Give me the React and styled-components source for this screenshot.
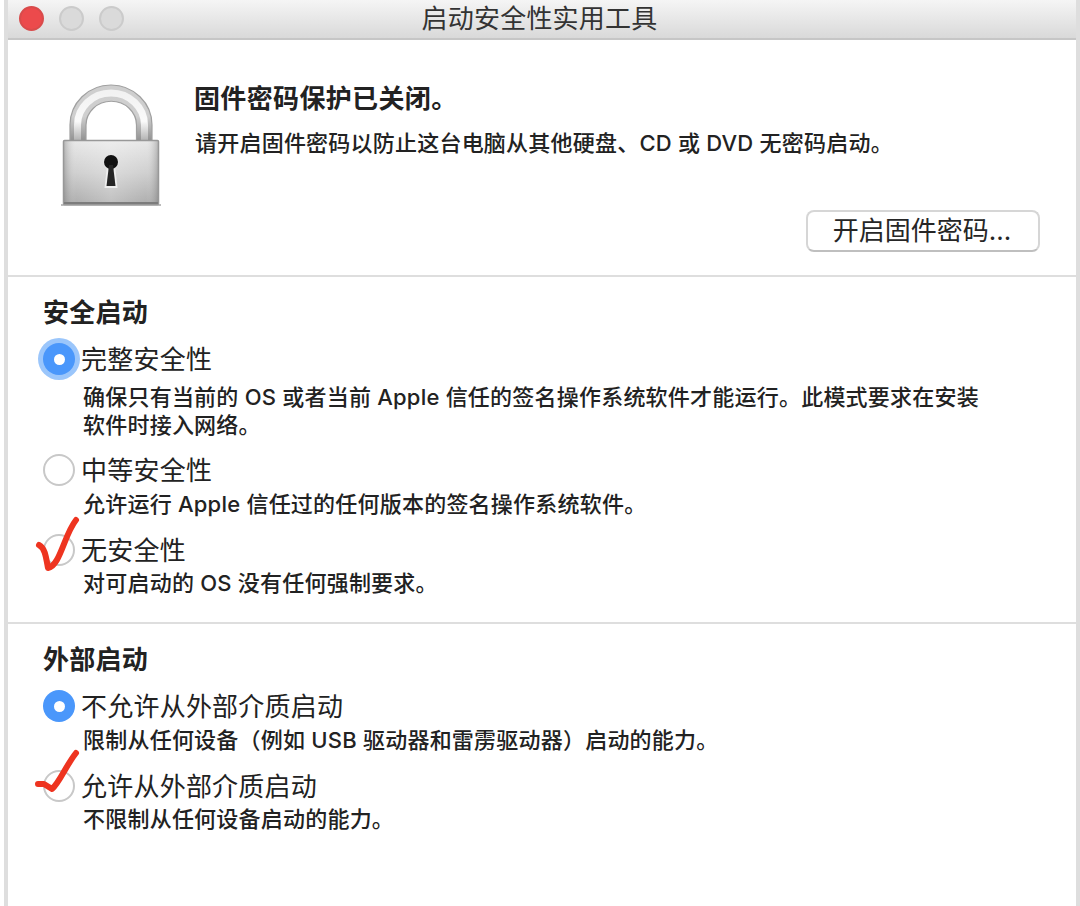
import React, {useState} from 'react'
import styled, {createGlobalStyle} from "styled-components";


const GlobalStyle = createGlobalStyle`
    * {
        box-sizing: border-box;
    }

    body {
        margin: 0;
        background: #fff;
        overflow: hidden;
    }
`

const Window = styled.div`
    display: flex;
    flex-direction: column;
    height: 906px;
    border-left: 4px solid #dedede;
    border-right: 4px solid #dedede;
    margin-left: 4px;
    background: #fff;
    color: #222;
    font-family: Inter, "Noto Sans CJK SC", sans-serif;
    font-size: 22px;
    line-height: 28px;
    letter-spacing: 0.22px;
    white-space: nowrap;
`

const TitleBar = styled.header`
    display: grid;
    grid-template-columns: 1fr auto 1fr;
    align-items: center;
    height: 40px;
    padding: 0 16px 2px 11px;
    background: linear-gradient(#f5f5f5, #d9d9d9);
    border-bottom: 2px solid #c6c6c6;
`

const Lights = styled.div`
    display: flex;
    gap: 15px;
`

const Light = styled.span`
    width: 25px;
    height: 25px;
    border-radius: 50%;
    background: ${props => props.$close ? "#ec4a4c" : "#dadada"};
    border: 2px solid ${props => props.$close ? "#d94b4b" : "#cbcbcb"};
`

const Title = styled.h1`
    margin: 0;
    padding-top: 1px;
    font-size: 26px;
    font-weight: 400;
    line-height: 34px;
    color: #333;
`

const Firmware = styled.section`
    display: flex;
    height: 237px;
    padding: 42px 36px 0 52px;
    border-bottom: 2px solid #dedede;
`

const FirmwareBody = styled.div`
    display: flex;
    flex-direction: column;
    flex: 1;
    padding-left: 32px;
`

const FirmwareTitle = styled.h2`
    margin: 0;
    padding-top: 1px;
    font-size: 26px;
    font-weight: 700;
    line-height: 32px;
    letter-spacing: 0.35px;
`

const FirmwareText = styled.p`
    margin: 14px 0 0 1px;
    font-weight: 500;
`

const Button = styled.button`
    align-self: flex-end;
    width: 234px;
    height: 42px;
    margin-top: 53px;
    padding: 0 2px 1px 0;
    border: 2px solid #d6d6d6;
    border-bottom-color: #bfbfbf;
    border-radius: 8px;
    background: #fff;
    color: #262626;
    font-family: inherit;
    font-size: 26px;
    line-height: 36px;
`

const Section = styled.section`
    height: ${props => props.$height}px;
    padding: 20px 36px 0 35px;
    border-bottom: ${props => props.$last ? "none" : "2px solid #dedede"};
`

const SectionTitle = styled.h2`
    margin: 0 0 14px;
    font-size: 26px;
    font-weight: 700;
    line-height: 32px;
`

const Option = styled.div`
    margin-bottom: ${props => props.$after || 16}px;
`

const OptionLabel = styled.label`
    display: flex;
    align-items: center;
    gap: 6px;
    height: 32px;
    font-size: 26px;
    line-height: 32px;
`

const LabelText = styled.span`
    padding-top: 2px;
`

const Radio = styled.span`
    display: flex;
    align-items: center;
    justify-content: center;
    position: relative;
    width: 32px;
    height: 32px;
    border-radius: 50%;
    background: ${props => props.$checked ? "#4a97fb" : "#fff"};
    border: ${props => props.$checked ? "none" : "2px solid #c8c8c8"};
    box-shadow: ${props => props.$focused ? "0 0 0 5px #9bc6fb" : "none"};
`

const Dot = styled.span`
    width: 11px;
    height: 11px;
    border-radius: 50%;
    background: #fff;
`

const Mark = styled.svg`
    position: absolute;
    left: -14px;
    top: -22px;
    overflow: visible;
`

const Description = styled.p`
    margin: ${props => props.$gap || 4}px 0 0 40px;
    font-weight: 500;
    white-space: pre-line;
`

const Padlock = () => (
    <svg width="102" height="128" viewBox="0 0 102 128">
        <defs>
            <linearGradient id="body" x1="0" y1="0" x2="0" y2="1">
                <stop offset="0" stopColor="#e6e6e6"/>
                <stop offset="0.5" stopColor="#cbcbcb"/>
                <stop offset="1" stopColor="#a4a4a4"/>
            </linearGradient>
            <linearGradient id="shine" x1="0" y1="0" x2="1" y2="0">
                <stop offset="0" stopColor="#777" stopOpacity="0.45"/>
                <stop offset="0.13" stopColor="#fff" stopOpacity="0.1"/>
                <stop offset="0.5" stopColor="#fff" stopOpacity="0.3"/>
                <stop offset="0.87" stopColor="#fff" stopOpacity="0.1"/>
                <stop offset="1" stopColor="#777" stopOpacity="0.45"/>
            </linearGradient>
            <linearGradient id="shackle" x1="0" y1="0" x2="0" y2="1">
                <stop offset="0" stopColor="#cecece"/>
                <stop offset="0.55" stopColor="#cfcfcf"/>
                <stop offset="1" stopColor="#8e8e8e"/>
            </linearGradient>
            <linearGradient id="glint" x1="0" y1="0" x2="0" y2="1">
                <stop offset="0" stopColor="#f2f2f2"/>
                <stop offset="0.6" stopColor="#fafafa"/>
                <stop offset="1" stopColor="#b4b4b4"/>
            </linearGradient>
        </defs>
        <path d="M10 60V43a41 40 0 0 1 82 0v17H76.500V43a25 23.500 0 0 0-50.500 0v17Z" fill="url(#shackle)" stroke="#a0a0a0" strokeWidth="1.2"/>
        <path d="M17.500 58V43a33.500 32 0 0 1 67 0v15" fill="none" stroke="url(#glint)" strokeWidth="7"/>
        <path d="M1 122h100v2H1Z" fill="#777" opacity="0.5"/>
        <rect x="3.5" y="58.5" width="95" height="64" rx="1" fill="url(#body)"/>
        <rect x="3.5" y="58.5" width="95" height="64" rx="1" fill="url(#shine)" stroke="#989898" strokeWidth="1.5"/>
        <path d="M4 121h94" stroke="#7c7c7c" strokeWidth="2"/>
        <path d="M47 84 44.500 106h13L55 84Z" fill="#eee"/>
        <circle cx="51" cy="80" r="8" fill="#e4e4e4"/>
        <circle cx="51" cy="80" r="7" fill="#111"/>
        <path d="M49 83 46.500 104h9L53 83Z" fill="#252525"/>
    </svg>
)

// hand drawn ticks, they lie over the radio circles
const marks = {
    deep: "M8 31C14 34 15 43 17 54C29 52 33 21 45 6",
    flat: "M7 34L13 34L21 39C29 32 34 17 45 3"
}

const security = [
    {
        label: "完整安全性",
        text: "确保只有当前的 OS 或者当前 Apple 信任的签名操作系统软件才能运行。此模式要求在安装\n软件时接入网络。",
        gap: 8,
        after: 15,
        focusable: true
    },
    {label: "中等安全性", text: "允许运行 Apple 信任过的任何版本的签名操作系统软件。"},
    {label: "无安全性", text: "对可启动的 OS 没有任何强制要求。", gap: 3, mark: "deep"}
]

const external = [
    {label: "不允许从外部介质启动", text: "限制从任何设备（例如 USB 驱动器和雷雳驱动器）启动的能力。"},
    {label: "允许从外部介质启动", text: "不限制从任何设备启动的能力。", gap: 3, mark: "flat"}
]

const OptionList = props => {
    const [selected, setSelected] = useState(0)

    return props.options.map((option, index) => {
        const checked = index === selected
        return (
            <Option key={index} $after={option.after}>
                <OptionLabel onClick={() => setSelected(index)}>
                    <Radio $checked={checked} $focused={checked && option.focusable}>
                        {checked && <Dot/>}
                        {option.mark && (
                            <Mark width="60" height="64" viewBox="0 0 60 64">
                                <path d={marks[option.mark]} fill="none" stroke="#ee3420" strokeWidth="6" strokeLinecap="round" strokeLinejoin="round"/>
                            </Mark>
                        )}
                    </Radio>
                    <LabelText>{option.label}</LabelText>
                </OptionLabel>
                <Description $gap={option.gap}>{option.text}</Description>
            </Option>
        )
    })
}

const App = () => {
    return (
        <>
            <GlobalStyle/>
            <Window>
                <TitleBar>
                    <Lights>
                        <Light $close/>
                        <Light/>
                        <Light/>
                    </Lights>
                    <Title>启动安全性实用工具</Title>
                </TitleBar>
                <Firmware>
                    <Padlock/>
                    <FirmwareBody>
                        <FirmwareTitle>固件密码保护已关闭。</FirmwareTitle>
                        <FirmwareText>请开启固件密码以防止这台电脑从其他硬盘、CD 或 DVD 无密码启动。</FirmwareText>
                        <Button>开启固件密码...</Button>
                    </FirmwareBody>
                </Firmware>
                <Section $height={347}>
                    <SectionTitle>安全启动</SectionTitle>
                    <OptionList options={security}/>
                </Section>
                <Section $height={282} $last>
                    <SectionTitle>外部启动</SectionTitle>
                    <OptionList options={external}/>
                </Section>
            </Window>
        </>
    )
}

export default App
